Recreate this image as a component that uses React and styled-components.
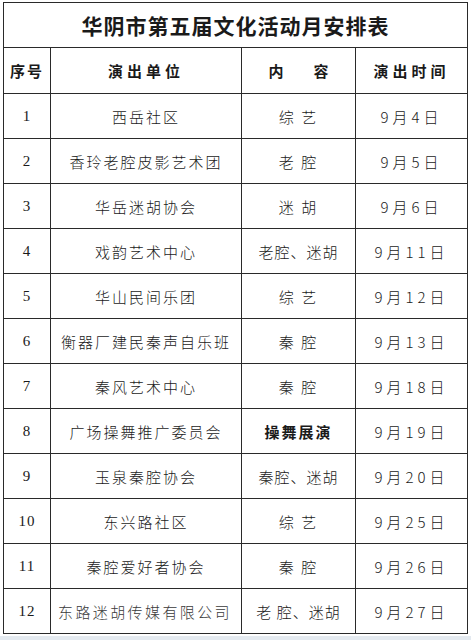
import React from "react";
import styled, { createGlobalStyle } from "styled-components";

const GlobalStyle = createGlobalStyle`
  html, body {
    margin: 0;
    padding: 0;
    background: #e4eaf0;
  }
  body {
    font-family: "Noto Sans CJK SC", sans-serif;
    color: #1a1a1a;
  }
`;

// Styles
const Sheet = styled.div`
  background: #fff;
  height: 636px;
  padding: 2px 4px 0 3px;
  box-sizing: border-box;
`;

const Table = styled.table`
  width: 464px;
  border-collapse: collapse;
  table-layout: fixed;
  border: 1px solid #2a2a2a;
`;

const Cell = styled.td`
  border: 1px solid #2a2a2a;
  padding: 0;
  text-align: ${(p) => p.$align || "center"};
  vertical-align: middle;
  font-size: 15px;
  font-weight: ${(p) => (p.$bold ? 600 : 300)};
  letter-spacing: ${(p) => p.$spacing || "1px"};
  color: ${(p) => p.$muted ? "#3a3a3a" : "#1a1a1a"};
  white-space: nowrap;
  padding-left: ${(p) => p.$indent || "0"};
`;

const NumCell = styled(Cell)`
  font-family: "Liberation Serif", serif;
  font-size: 15px;
  font-weight: 400;
  letter-spacing: 1px;
`;

const DateCell = styled(Cell)`
  word-spacing: 0;
  letter-spacing: 4px;
`;

const TitleCell = styled.th`
  height: 44px;
  border: 1px solid #2a2a2a;
  font-size: 21px;
  font-weight: 700;
  letter-spacing: 1px;
  text-align: center;
  padding: 0;
`;

const HeadCell = styled.th`
  height: 45px;
  border: 1px solid #2a2a2a;
  font-size: 15px;
  font-weight: 700;
  letter-spacing: ${(p) => p.$spacing || "4px"};
  text-align: center;
  padding: 0;
  white-space: pre;
`;

const Row = styled.tr`
  height: 45px;
`;

const rows = [
  { unit: "西岳社区", kind: "综 艺", date: "9月4日" },
  { unit: "香玲老腔皮影艺术团", kind: "老 腔", date: "9月5日" },
  { unit: "华岳迷胡协会", kind: "迷 胡", date: "9月6日" },
  { unit: "戏韵艺术中心", kind: "老腔、迷胡", date: "9月11日" },
  { unit: "华山民间乐团", kind: "综 艺", date: "9月12日" },
  { unit: "衡器厂建民秦声自乐班", kind: "秦 腔", date: "9月13日" },
  { unit: "秦风艺术中心", kind: "秦 腔", date: "9月18日" },
  { unit: "广场操舞推广委员会", kind: "操舞展演", date: "9月19日", bold: true },
  { unit: "玉泉秦腔协会", kind: "秦腔、迷胡", date: "9月20日" },
  { unit: "东兴路社区", kind: "综 艺", date: "9月25日" },
  { unit: "秦腔爱好者协会", kind: "秦 腔", date: "9月26日" },
  { unit: "东路迷胡传媒有限公司", kind: "老 腔、迷胡", date: "9月27日", left: true },
];

const App = () => (
  <>
    <GlobalStyle />
    <Sheet>
      <Table>
        <colgroup>
          <col style={{ width: 47 }} />
          <col style={{ width: 191 }} />
          <col style={{ width: 114 }} />
          <col style={{ width: 112 }} />
        </colgroup>
        <thead>
          <tr>
            <TitleCell colSpan={4}>华阴市第五届文化活动月安排表</TitleCell>
          </tr>
          <tr>
            <HeadCell $spacing="2px">序号</HeadCell>
            <HeadCell>演出单位</HeadCell>
            <HeadCell $spacing="0">{"内　　容"}</HeadCell>
            <HeadCell>演出时间</HeadCell>
          </tr>
        </thead>
        <tbody>
          {rows.map((r, i) => (
            <Row key={i}>
              <NumCell>{i + 1}</NumCell>
              <Cell
                $spacing={r.left ? "2.4px" : "2px"}
                $align={r.left ? "left" : "center"}
                $indent={r.left ? "7px" : "0"}
                $muted={r.left}
              >
                {r.unit}
              </Cell>
              <Cell $bold={r.bold} $spacing={r.kind.length > 4 ? "1px" : "2px"}>
                {r.kind}
              </Cell>
              <DateCell>{r.date}</DateCell>
            </Row>
          ))}
        </tbody>
      </Table>
    </Sheet>
  </>
);

export default App;
